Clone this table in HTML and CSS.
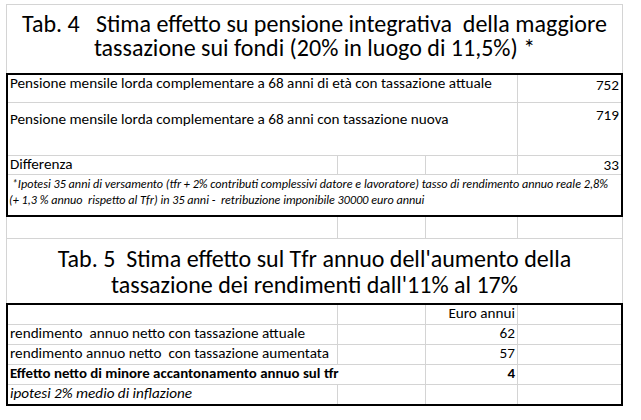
FILE: index.html
```html
<!DOCTYPE html>
<html lang="it">
<head>
<meta charset="utf-8">
<title>Tab. 4 e Tab. 5</title>
<link rel="stylesheet" href="styles.css">
</head>
<body>
<div class="sheet">
  <div class="title title-4">
    <p class="tline">Tab. 4   Stima effetto su pensione integrativa  della maggiore<br>tassazione sui fondi (20% in luogo di 11,5%) *</p>
  </div>
  <div class="tbl">
    <div class="row row-pens1">
      <div class="c span3 txt">Pensione mensile lorda complementare a 68 anni di età con tassazione attuale</div>
      <div class="c num">752</div>
    </div>
    <div class="row row-pens2">
      <div class="c span3 txt">Pensione mensile lorda complementare a 68 anni con tassazione nuova</div>
      <div class="c num">719</div>
    </div>
    <div class="row row-diff">
      <div class="c txt">Differenza</div>
      <div class="c"></div>
      <div class="c"></div>
      <div class="c num">33</div>
    </div>
    <div class="row row-note">
      <div class="c span4 note"><span class="nline"> *Ipotesi 35 anni di versamento (tfr + 2% contributi complessivi datore e lavoratore) tasso di rendimento annuo reale 2,8%</span><span class="nline">(+ 1,3 % annuo  rispetto al Tfr) in 35 anni -  retribuzione imponibile 30000 euro annui</span></div>
    </div>
  </div>
  <div class="row row-loose">
    <div class="c"></div>
    <div class="c"></div>
    <div class="c"></div>
    <div class="c"></div>
  </div>
  <div class="title title-5">
    <p class="tline">Tab. 5  Stima effetto sul Tfr annuo dell'aumento della<br>tassazione dei rendimenti dall'11% al 17%</p>
  </div>
  <div class="tbl">
    <div class="row row-std">
      <div class="c"></div>
      <div class="c"></div>
      <div class="c num">Euro annui</div>
      <div class="c"></div>
    </div>
    <div class="row row-std">
      <div class="c txt">rendimento  annuo netto con tassazione attuale</div>
      <div class="c"></div>
      <div class="c num">62</div>
      <div class="c"></div>
    </div>
    <div class="row row-std">
      <div class="c txt">rendimento annuo netto  con tassazione aumentata</div>
      <div class="c"></div>
      <div class="c num">57</div>
      <div class="c"></div>
    </div>
    <div class="row row-std">
      <div class="c span2 txt bold">Effetto netto di minore accantonamento annuo sul tfr</div>
      <div class="c num bold">4</div>
      <div class="c"></div>
    </div>
    <div class="row row-std row-last">
      <div class="c txt ital">ipotesi 2% medio di inflazione</div>
      <div class="c"></div>
      <div class="c"></div>
      <div class="c"></div>
    </div>
  </div>
</div>
</body>
</html>
```

FILE: styles.css
```css
* {
  box-sizing: border-box;
  margin: 0;
  padding: 0;
}

body {
  margin: 0;
  background: #ffffff;
  color: #000000;
  font-family: Carlito, Calibri, Lato, sans-serif;
}

.sheet {
  margin: 4px 0 0 6px;
  width: 617px;
  border-top: 1px solid #d4d4d4;
  border-left: 1px solid #d4d4d4;
  border-right: 1px solid #d4d4d4;
}

.title {
  font-size: 24px;
  text-align: center;
}

.tline {
  white-space: pre;
}

.title-4 {
  height: 68px;
  padding-top: 7px;
  line-height: 24px;
}

.title-5 {
  height: 65px;
  padding-top: 7px;
  line-height: 26px;
  border-top: 1px solid #d4d4d4;
}

.tbl {
  margin: 0 -1px;
  border: 2px solid #000000;
}

.row {
  display: grid;
  grid-template-columns: 330px 88px 92px 1fr;
  border-bottom: 1px solid #d4d4d4;
  font-size: 15.2px;
  line-height: 16px;
}

.row-loose {
  grid-template-columns: 331px 88px 92px 1fr;
  height: 21px;
  border-bottom: none;
}

.c {
  border-right: 1px solid #d4d4d4;
  white-space: pre;
  min-width: 0;
}

.c:last-child {
  border-right: none;
}

.span2 {
  grid-column: span 2;
}

.span3 {
  grid-column: span 3;
}

.span4 {
  grid-column: span 4;
}

.txt {
  padding-left: 2px;
}

.num {
  text-align: right;
  padding-right: 2px;
}

.bold {
  font-weight: bold;
  font-size: 14.9px;
}

.ital {
  font-style: italic;
}

.row-pens1 {
  height: 28px;
}

.row-pens1 .txt {
  padding-top: 0;
}

.row-pens1 .num {
  padding-top: 2px;
}

.row-pens2 {
  height: 53px;
}

.row-pens2 .txt {
  padding-top: 8px;
}

.row-pens2 .num {
  padding-top: 4px;
}

.row-diff {
  height: 19px;
}

.row-diff .num {
  padding-top: 1px;
}

.row-note {
  height: 40px;
  border-bottom: none;
}

.note {
  display: flex;
  flex-direction: column;
  font-style: italic;
  font-size: 12.2px;
  line-height: 16px;
  padding-top: 1px;
  padding-left: 1px;
}

.nline {
  white-space: pre;
}

.row-std {
  height: 20px;
}

.row-last {
  height: 19px;
  border-bottom: none;
}
```
